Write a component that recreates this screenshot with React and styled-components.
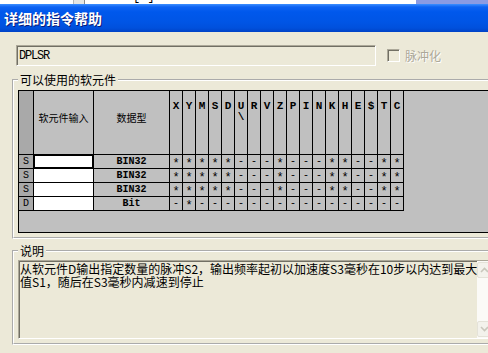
import React from "react";
import styled, { createGlobalStyle } from "styled-components";

const GlobalStyle = createGlobalStyle`
  html, body { margin: 0; padding: 0; background: #ECE9D8; overflow: hidden; }
  * { box-sizing: border-box; }
`;

const Window = styled.div`
  width: 488px;
  height: 353px;
  overflow: hidden;
  background: #ECE9D8;
  font-family: "Noto Sans CJK SC", "Liberation Sans", sans-serif;
  display: flex;
  flex-direction: column;
`;

const TopStrip = styled.div`
  height: 4px;
  flex: none;
  display: flex;
  overflow: hidden;
`;

const StripPage = styled.div`
  flex: 1;
  background: #fff;
  display: flex;
  align-items: flex-start;
`;

const StripThumb = styled.div`
  margin-left: 73px;
  width: 12px;
  height: 4px;
  background: #E6E6E2;
  border-left: 1px solid #B8B8B8;
  border-right: 1px solid #8C8C8C;
`;

const StripText = styled.span`
  margin-left: 48px;
  margin-top: -10px;
  font: 12px/14px "Liberation Mono", monospace;
  color: #000;
`;

const StripTail = styled.div`
  width: 72px;
  background: #8B9BE3;
`;

const TitleBar = styled.div`
  height: 28px;
  flex: none;
  display: flex;
  align-items: center;
  padding-left: 4px;
  background: linear-gradient(
    to bottom,
    #3D8FFF 0px,
    #0D62F2 3px,
    #0058EC 8px,
    #0055E5 18px,
    #0050DC 24px,
    #0042C6 28px
  );
`;

const TitleText = styled.span`
  color: #fff;
  font-size: 14px;
  font-weight: bold;
  line-height: 16px;
  text-shadow: 1px 1px 0 #0A1C7A;
`;

const Body = styled.div`
  display: flex;
  flex-direction: column;
`;

const CommandRow = styled.div`
  margin-top: 13px;
  display: flex;
  align-items: center;
  height: 21px;
`;

const Sunken = `
  border: 1px solid;
  border-color: #ACA899 #FFFFFF #FFFFFF #ACA899;
  box-shadow: inset 1px 1px 0 #716F64;
`;

const CommandField = styled.div`
  ${Sunken}
  margin-left: 16px;
  width: 360px;
  height: 21px;
  padding-left: 2px;
  display: flex;
  align-items: center;
  font: 12px/14px "Liberation Mono", monospace;
  letter-spacing: -1.2px;
  color: #000;
`;

const CheckBox = styled.div`
  ${Sunken}
  margin-left: 11px;
  width: 13px;
  height: 13px;
  background: #ECE9D8;
`;

const CheckLabel = styled.span`
  margin-left: 5px;
  font-size: 12px;
  line-height: 14px;
  color: #ACA899;
  text-shadow: 1px 1px 0 #fff;
`;

const Group = styled.fieldset`
  margin: ${(p) => p.$top}px 0 0 12px;
  padding: ${(p) => p.$padTop}px 0 4px 4px;
  border: 2px groove #fff;
  width: 500px;
  min-width: 0;
`;

const Legend = styled.legend`
  padding: 0 2px;
  margin-left: 0;
  font-size: 12px;
  line-height: 12px;
  color: #000;
`;

const DeviceGrid = styled.div`
  height: 143px;
  background: #C0C0C0;
  border-top: 1px solid #000;
  border-left: 1px solid #000;
  border-bottom: 1px solid #000;
  display: flex;
  align-items: flex-start;
`;

const GridTable = styled.div`
  display: grid;
  grid-template-columns: 14px 59px 75px repeat(18, 12px);
  grid-template-rows: 63px repeat(4, 13px);
  gap: 1px;
  background: #000;
  border-right: 1px solid #000;
  border-bottom: 1px solid #000;
`;

const cellBg = {
  corner: "#A9A9A9",
  rowhead: "#A9A9A9",
  head: "#C0C0C0",
  letter: "#C0C0C0",
  input: "#FFFFFF",
  type: "#C0C0C0",
  mark: "#C0C0C0",
};

const Cell = styled.div`
  background: ${(p) => cellBg[p.$kind]};
  color: #000;
  display: flex;
  flex-direction: column;
  align-items: center;
  justify-content: ${(p) => (p.$kind === "head" || p.$kind === "letter" ? "flex-start" : "center")};
  padding-top: ${(p) => (p.$kind === "head" ? 22 : p.$kind === "letter" ? 10 : 0)}px;
  font-family: ${(p) =>
    p.$kind === "head" ? `"Noto Sans CJK SC", sans-serif` : `"Liberation Mono", monospace`};
  font-size: ${(p) => (p.$kind === "head" ? 10 : p.$kind === "letter" ? 11 : 10)}px;
  font-weight: ${(p) => (p.$kind === "letter" || p.$kind === "type" ? "bold" : "normal")};
  line-height: ${(p) => (p.$kind === "letter" ? 11 : 10)}px;
  box-shadow: ${(p) => (p.$focus ? "inset 0 0 0 1px #000" : "none")};
  white-space: nowrap;
`;

const Mark = styled.span`
  font-size: ${(p) => (p.$star ? 12 : 10)}px;
  line-height: 10px;
  transform: translateY(${(p) => (p.$star ? 2 : 0)}px);
`;

const DescBox = styled.div`
  ${Sunken}
  width: 474px;
  height: 79px;
  background: #ECE9D8;
  display: flex;
`;

const DescText = styled.div`
  flex: 1;
  padding: 1px 0 0 1px;
  font-size: 12px;
  line-height: 13px;
  color: #000;
  white-space: nowrap;
`;

const DescLine = styled.div`
  height: 13px;
`;

const ScrollBar = styled.div`
  width: 17px;
  padding: 1px 0;
  display: flex;
  flex-direction: column;
  background: #FBFAF7;
`;

const ScrollButton = styled.div`
  height: 16px;
  border: 1px solid #E4E2D8;
  border-radius: 2px;
  background: #F3F2EC;
  display: flex;
  align-items: center;
  justify-content: center;
`;

const ScrollTrack = styled.div`
  flex: 1;
`;

const Chevron = ({ up }) => (
  <svg width="9" height="6" viewBox="0 0 9 6">
    <path
      d={up ? "M1 5 L4.5 1.5 L8 5" : "M1 1 L4.5 4.5 L8 1"}
      fill="none"
      stroke="#C9C7BC"
      strokeWidth="1.6"
    />
  </svg>
);

const LETTERS = ["X", "Y", "M", "S", "D", ["U", "\\"], "R", "V", "Z", "P", "I", "N", "K", "H", "E", "$", "T", "C"];
const S_MARKS = "*****---*---**--**";
const D_MARKS = "-*----------------";

const ROWS = [
  { op: "S", type: "BIN32", marks: S_MARKS, focus: true },
  { op: "S", type: "BIN32", marks: S_MARKS },
  { op: "S", type: "BIN32", marks: S_MARKS },
  { op: "D", type: "Bit", marks: D_MARKS },
];

export default function App() {
  return (
    <>
      <GlobalStyle />
      <Window>
        <TopStrip>
          <StripPage>
            <StripThumb />
            <StripText>[8]</StripText>
          </StripPage>
          <StripTail />
        </TopStrip>
        <TitleBar>
          <TitleText>详细的指令帮助</TitleText>
        </TitleBar>
        <Body>
          <CommandRow>
            <CommandField>DPLSR</CommandField>
            <CheckBox />
            <CheckLabel>脉冲化</CheckLabel>
          </CommandRow>

          <Group $top={8} $padTop={4}>
            <Legend>可以使用的软元件</Legend>
            <DeviceGrid>
              <GridTable>
                <Cell $kind="corner" />
                <Cell $kind="head">软元件输入</Cell>
                <Cell $kind="head">数据型</Cell>
                {LETTERS.map((l, i) => (
                  <Cell key={i} $kind="letter">
                    {Array.isArray(l) ? (
                      <>
                        <span>{l[0]}</span>
                        <span>{l[1]}</span>
                      </>
                    ) : (
                      l
                    )}
                  </Cell>
                ))}
                {ROWS.map((r, ri) => (
                  <React.Fragment key={ri}>
                    <Cell $kind="rowhead">{r.op}</Cell>
                    <Cell $kind="input" $focus={r.focus} />
                    <Cell $kind="type">{r.type}</Cell>
                    {r.marks.split("").map((m, mi) => (
                      <Cell key={mi} $kind="mark">
                        <Mark $star={m === "*"}>{m}</Mark>
                      </Cell>
                    ))}
                  </React.Fragment>
                ))}
              </GridTable>
            </DeviceGrid>
          </Group>

          <Group $top={6} $padTop={3}>
            <Legend>说明</Legend>
            <DescBox>
              <DescText>
                <DescLine>从软元件D输出指定数量的脉冲S2，输出频率起初以加速度S3毫秒在10步以内达到最大</DescLine>
                <DescLine>值S1，随后在S3毫秒内减速到停止</DescLine>
              </DescText>
              <ScrollBar>
                <ScrollButton>
                  <Chevron up />
                </ScrollButton>
                <ScrollTrack />
                <ScrollButton>
                  <Chevron />
                </ScrollButton>
              </ScrollBar>
            </DescBox>
          </Group>
        </Body>
      </Window>
    </>
  );
}
